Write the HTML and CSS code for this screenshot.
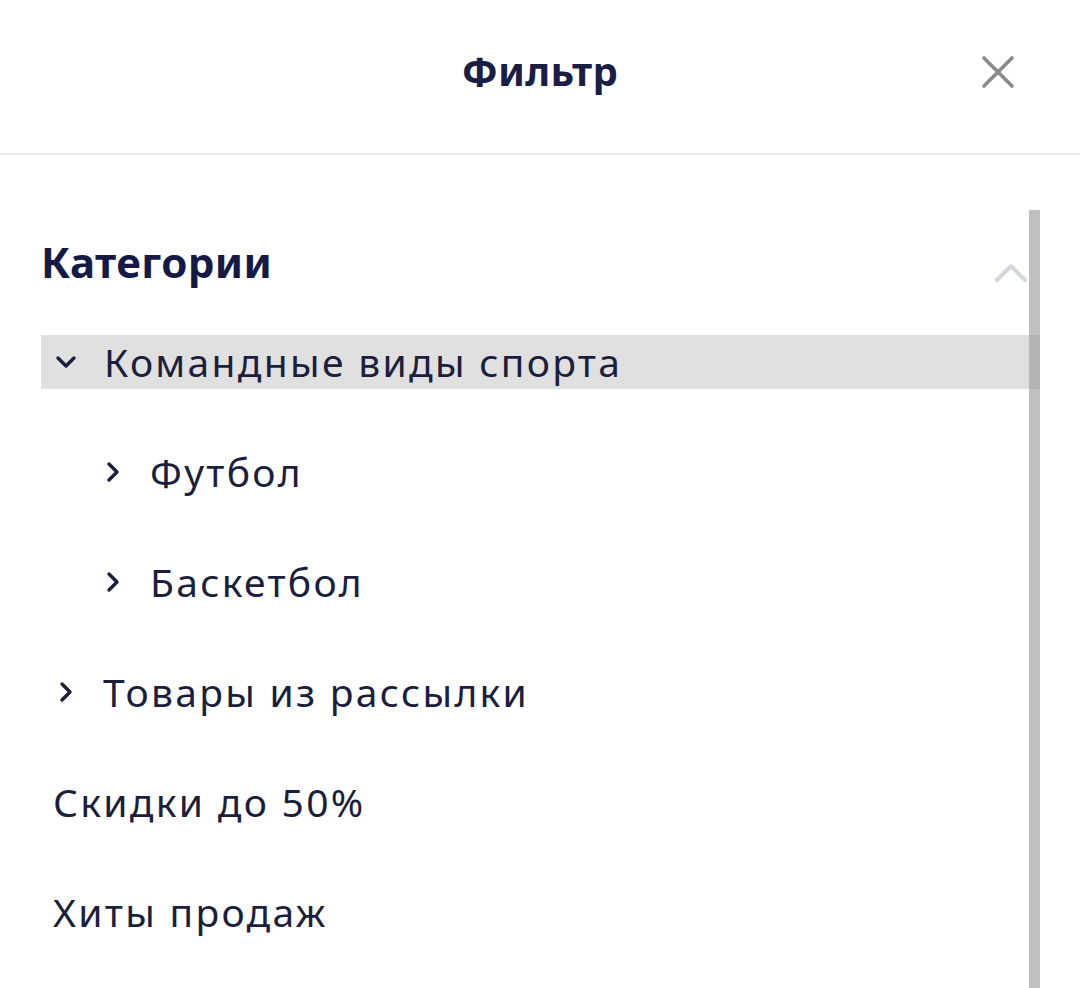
FILE: index.html
```html
<!DOCTYPE html>
<html lang="ru">
<head>
<meta charset="utf-8">
<link rel="stylesheet" href="styles.css">
</head>
<body>
<div class="page">
  <header class="header">
    <h1 class="title">Фильтр</h1>
    <button class="close" aria-label="Закрыть">
      <svg width="34" height="34" viewBox="0 0 34 34"><path d="M3 3 L31 31 M31 3 L3 31" stroke="#8a8a8a" stroke-width="3.6" stroke-linecap="round"/></svg>
    </button>
  </header>
  <main class="body">
    <div class="content">
      <div class="section-head">
        <h2 class="section-title">Категории</h2>
        <svg class="chev-up" width="34" height="22" viewBox="0 0 34 22"><path d="M3 19 L17 5 L31 19" fill="none" stroke="#d3d6dd" stroke-width="4" stroke-linecap="round" stroke-linejoin="round"/></svg>
      </div>
      <ul class="list">
        <li class="item active">
          <svg class="chev" width="22" height="14" viewBox="0 0 22 14"><path d="M3 3 L11 11 L19 3" fill="none" stroke="#1b1f3d" stroke-width="3.4" stroke-linecap="round" stroke-linejoin="round"/></svg>
          <span>Командные виды спорта</span>
        </li>
        <li class="item sub">
          <svg class="chev" width="16" height="22" viewBox="0 0 16 22"><path d="M4 3 L12 11 L4 19" fill="none" stroke="#1b1f3d" stroke-width="3.4" stroke-linecap="round" stroke-linejoin="round"/></svg>
          <span>Футбол</span>
        </li>
        <li class="item sub">
          <svg class="chev" width="16" height="22" viewBox="0 0 16 22"><path d="M4 3 L12 11 L4 19" fill="none" stroke="#1b1f3d" stroke-width="3.4" stroke-linecap="round" stroke-linejoin="round"/></svg>
          <span>Баскетбол</span>
        </li>
        <li class="item top">
          <svg class="chev" width="16" height="22" viewBox="0 0 16 22"><path d="M4 3 L12 11 L4 19" fill="none" stroke="#1b1f3d" stroke-width="3.4" stroke-linecap="round" stroke-linejoin="round"/></svg>
          <span>Товары из рассылки</span>
        </li>
        <li class="item plain"><span>Скидки до 50%</span></li>
        <li class="item plain"><span>Хиты продаж</span></li>
      </ul>
    </div>
    <div class="scrollbar"></div>
  </main>
</div>
</body>
</html>
```

FILE: styles.css
```css
* { box-sizing: border-box; }
html, body { margin: 0; padding: 0; background: #fff; }
body {
  font-family: "Noto Sans", "Open Sans", sans-serif;
  color: #1b1f3d;
  width: 1080px;
  height: 988px;
  overflow: hidden;
}
.header {
  height: 155px;
  border-bottom: 2px solid #ececec;
  display: flex;
  align-items: center;
  justify-content: center;
  position: relative;
  padding-bottom: 12px;
}
.title {
  margin: 0;
  font-size: 40px;
  font-weight: 700;
  letter-spacing: 0.3px;
  color: #1a1e45;
}
.close {
  position: absolute;
  right: 65px;
  top: 55px;
  background: none;
  border: 0;
  padding: 0;
  width: 34px;
  height: 34px;
}
.body {
  display: flex;
  padding-top: 55px;
}
.content {
  width: 999px;
  margin-left: 41px;
}
.section-head {
  display: flex;
  justify-content: space-between;
  align-items: flex-start;
  height: 125px;
  padding-top: 24px;
}
.section-title {
  margin: 0;
  font-size: 42px;
  font-weight: 700;
  line-height: 56px;
  letter-spacing: 0.4px;
  color: #141a45;
}
.chev-up { margin-top: 27px; margin-right: 12px; }
.list {
  list-style: none;
  margin: 0;
  padding: 0;
  display: flex;
  flex-direction: column;
  gap: 56px;
}
.item {
  height: 54px;
  display: flex;
  align-items: center;
  font-size: 39px;
  line-height: 54px;
  letter-spacing: 2.3px;
  padding-left: 14px;
}
.item .chev { flex: none; }
.item.active { background: #e0e0e0; }
.item.active .chev { margin-right: 27px; }
.item.top { padding-left: 17px; }
.item.top .chev { margin-right: 29px; }
.item.sub { padding-left: 64px; }
.item.sub .chev { margin-right: 29px; }
.item.plain { padding-left: 12px; }
.scrollbar {
  width: 11px;
  margin-left: -11px;
  height: 800px;
  background: rgba(150,150,150,0.6);
  position: relative;
  z-index: 1;
}
```
